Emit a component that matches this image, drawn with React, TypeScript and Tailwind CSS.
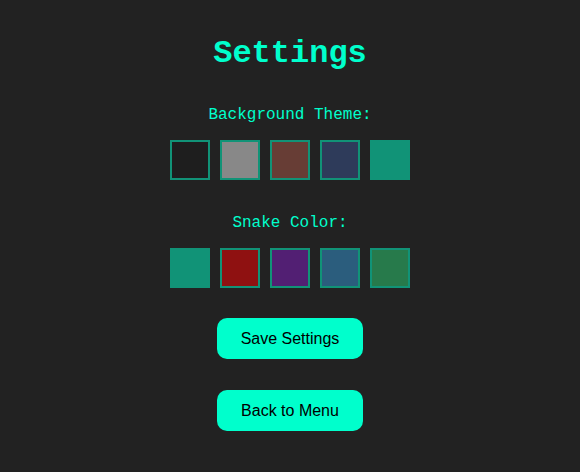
import React from "react";

const bgThemes = ["#1e1e1e", "#888888", "#673d35", "#2e3b5a", "#119377"];
const snakeColors = ["#119377", "#8f1111", "#521f73", "#2b5d7d", "#277a4b"];

const Swatch: React.FC<{ color: string }> = ({ color }) => (
  <button
    className="w-10 h-10 border-2 border-[#119377]"
    style={{ backgroundColor: color }}
  />
);

export default function App() {
  return (
    <div className="w-[580px] h-[472px] bg-[#222222] flex flex-col items-center">
      <h1 className="mt-[36px] text-[32px] leading-[36px] font-bold text-[#00ffcc] font-['Courier_New','Liberation_Mono',monospace]">
        Settings
      </h1>

      <p className="mt-[33px] text-base leading-[20px] text-[#00ffcc] font-['Courier_New','Liberation_Mono',monospace]">
        Background Theme:
      </p>
      <div className="mt-[15px] flex gap-[10px]">
        {bgThemes.map((c) => (
          <Swatch key={c} color={c} />
        ))}
      </div>

      <p className="mt-[33px] text-base leading-[20px] text-[#00ffcc] font-['Courier_New','Liberation_Mono',monospace]">
        Snake Color:
      </p>
      <div className="mt-[15px] flex gap-[10px]">
        {snakeColors.map((c) => (
          <Swatch key={c} color={c} />
        ))}
      </div>

      <button className="mt-[30px] w-[146px] h-[41px] rounded-[10px] bg-[#00ffcc] text-black text-base font-['Liberation_Sans',Arial,sans-serif]">
        Save Settings
      </button>
      <button className="mt-[31px] w-[146px] h-[41px] rounded-[10px] bg-[#00ffcc] text-black text-base font-['Liberation_Sans',Arial,sans-serif]">
        Back to Menu
      </button>
    </div>
  );
}
